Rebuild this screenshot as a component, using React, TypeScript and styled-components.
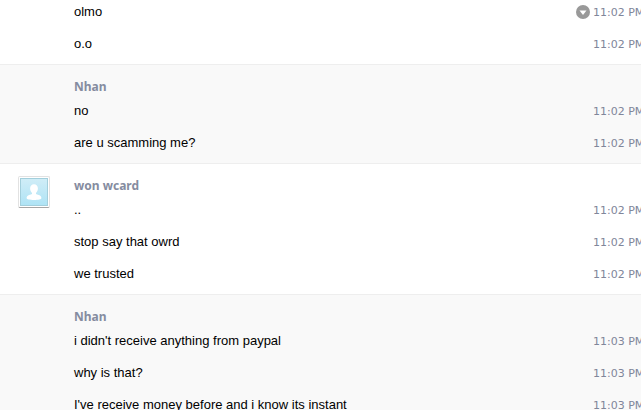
import React from "react";
import styled, { createGlobalStyle } from "styled-components";

const GlobalStyle = createGlobalStyle`
  *, *::before, *::after { box-sizing: border-box; }
  html, body, #root { height: 100%; }
  body {
    margin: 0;
    background: #ffffff;
    color: #000000;
    font-family: "Liberation Sans", Helvetica, Arial, sans-serif;
    font-size: 13px;
    line-height: 16px;
  }
`;

const Viewport = styled.main`
  height: 100%;
  overflow: hidden;
`;

const Transcript = styled.div`
  margin-top: -4px;
`;

const Group = styled.section<{ $own?: boolean; $continued?: boolean }>`
  display: grid;
  grid-template-columns: 74px minmax(0, 1fr);
  padding: ${(p) => (p.$continued ? "0 0 4px" : "14px 0 4px")};
  border-top: ${(p) => (p.$continued ? "0" : "1px solid #eeeeee")};
  background: ${(p) => (p.$own ? "#f9f9f9" : "#ffffff")};
`;

const AvatarCell = styled.div`
  padding-left: 18px;
`;

const AvatarFrame = styled.div`
  width: 32px;
  height: 32px;
  margin-top: -2px;
  padding: 1px;
  border: 1px solid #e2e2e2;
  border-bottom-color: #a6a6a6;
  border-radius: 2px;
  background: #ffffff;
`;

const AvatarPicture = styled.svg`
  display: block;
  width: 28px;
  height: 28px;
`;

const Sender = styled.h2`
  margin: 0;
  color: #858ca0;
  font-family: "Noto Sans", "Open Sans", sans-serif;
  font-size: 12px;
  font-weight: 700;
  line-height: 16px;
`;

const Messages = styled.ul`
  margin: 0;
  padding: 0;
  list-style: none;
`;

const MessageRow = styled.li`
  display: flex;
  align-items: baseline;
  height: 32px;
  line-height: 32px;
`;

const MessageText = styled.p`
  flex: 1;
  margin: 0;
`;

const MenuButton = styled.button`
  flex: none;
  align-self: center;
  width: 14px;
  height: 14px;
  margin: 0 3px 0 0;
  padding: 0;
  border: 0;
  background: none;
  cursor: pointer;

  svg {
    display: block;
  }
`;

const Time = styled.time`
  flex: none;
  width: 48px;
  color: #80869a;
  font-family: "DejaVu Sans", sans-serif;
  font-size: 11px;
  white-space: nowrap;
`;

function Avatar() {
  return (
    <AvatarFrame>
      <AvatarPicture viewBox="0 0 28 28" role="img" aria-label="Profile picture">
        <defs>
          <linearGradient id="sky" x1="0" y1="0" x2="0" y2="1">
            <stop offset="0" stopColor="#d0edf7" />
            <stop offset="1" stopColor="#aee3f5" />
          </linearGradient>
        </defs>
        <rect x="0.5" y="0.5" width="27" height="27" fill="url(#sky)" stroke="#a3cfdc" />
        <path
          fill="#ffffff"
          d="M14 6.2c2.4 0 3.9 1.8 3.9 4.4 0 1.9-.8 3.5-1.9 4.4v1.1c.6.5 1.7.6 2.9 1 1.6.5 2.5 1.5 2.5 3.2 0 1-3.3 1.7-7.4 1.7s-7.4-.7-7.4-1.7c0-1.7.9-2.7 2.5-3.2 1.2-.4 2.3-.5 2.9-1V15c-1.1-.9-1.9-2.5-1.9-4.4 0-2.6 1.5-4.4 3.9-4.4z"
        />
      </AvatarPicture>
    </AvatarFrame>
  );
}

function ChevronBadge() {
  return (
    <svg width="14" height="14" viewBox="0 0 14 14" aria-hidden="true">
      <circle cx="7" cy="7" r="7" fill="#999999" />
      <path d="M3.5 5.6h7L7 10z" fill="#ffffff" />
    </svg>
  );
}

type Message = { text: string; time: string; menu?: boolean };
type MessageGroup = {
  sender?: string;
  own?: boolean;
  avatar?: boolean;
  messages: Message[];
};

const groups: MessageGroup[] = [
  {
    messages: [
      { text: "olmo", time: "11:02 PM", menu: true },
      { text: "o.o", time: "11:02 PM" },
    ],
  },
  {
    sender: "Nhan",
    own: true,
    messages: [
      { text: "no", time: "11:02 PM" },
      { text: "are u scamming me?", time: "11:02 PM" },
    ],
  },
  {
    sender: "won wcard",
    avatar: true,
    messages: [
      { text: "..", time: "11:02 PM" },
      { text: "stop say that owrd", time: "11:02 PM" },
      { text: "we trusted", time: "11:02 PM" },
    ],
  },
  {
    sender: "Nhan",
    own: true,
    messages: [
      { text: "i didn't receive anything from paypal", time: "11:03 PM" },
      { text: "why is that?", time: "11:03 PM" },
      { text: "I've receive money before and i know its instant", time: "11:03 PM" },
    ],
  },
];

export default function App() {
  return (
    <>
      <GlobalStyle />
      <Viewport>
        <Transcript>
          {groups.map((group, index) => (
            <Group key={index} $own={group.own} $continued={!group.sender}>
              <AvatarCell>{group.avatar && <Avatar />}</AvatarCell>
              <div>
                {group.sender && <Sender>{group.sender}</Sender>}
                <Messages>
                  {group.messages.map((message) => (
                    <MessageRow key={message.text}>
                      <MessageText>{message.text}</MessageText>
                      {message.menu && (
                        <MenuButton type="button" aria-label="Message options">
                          <ChevronBadge />
                        </MenuButton>
                      )}
                      <Time>{message.time}</Time>
                    </MessageRow>
                  ))}
                </Messages>
              </div>
            </Group>
          ))}
        </Transcript>
      </Viewport>
    </>
  );
}
